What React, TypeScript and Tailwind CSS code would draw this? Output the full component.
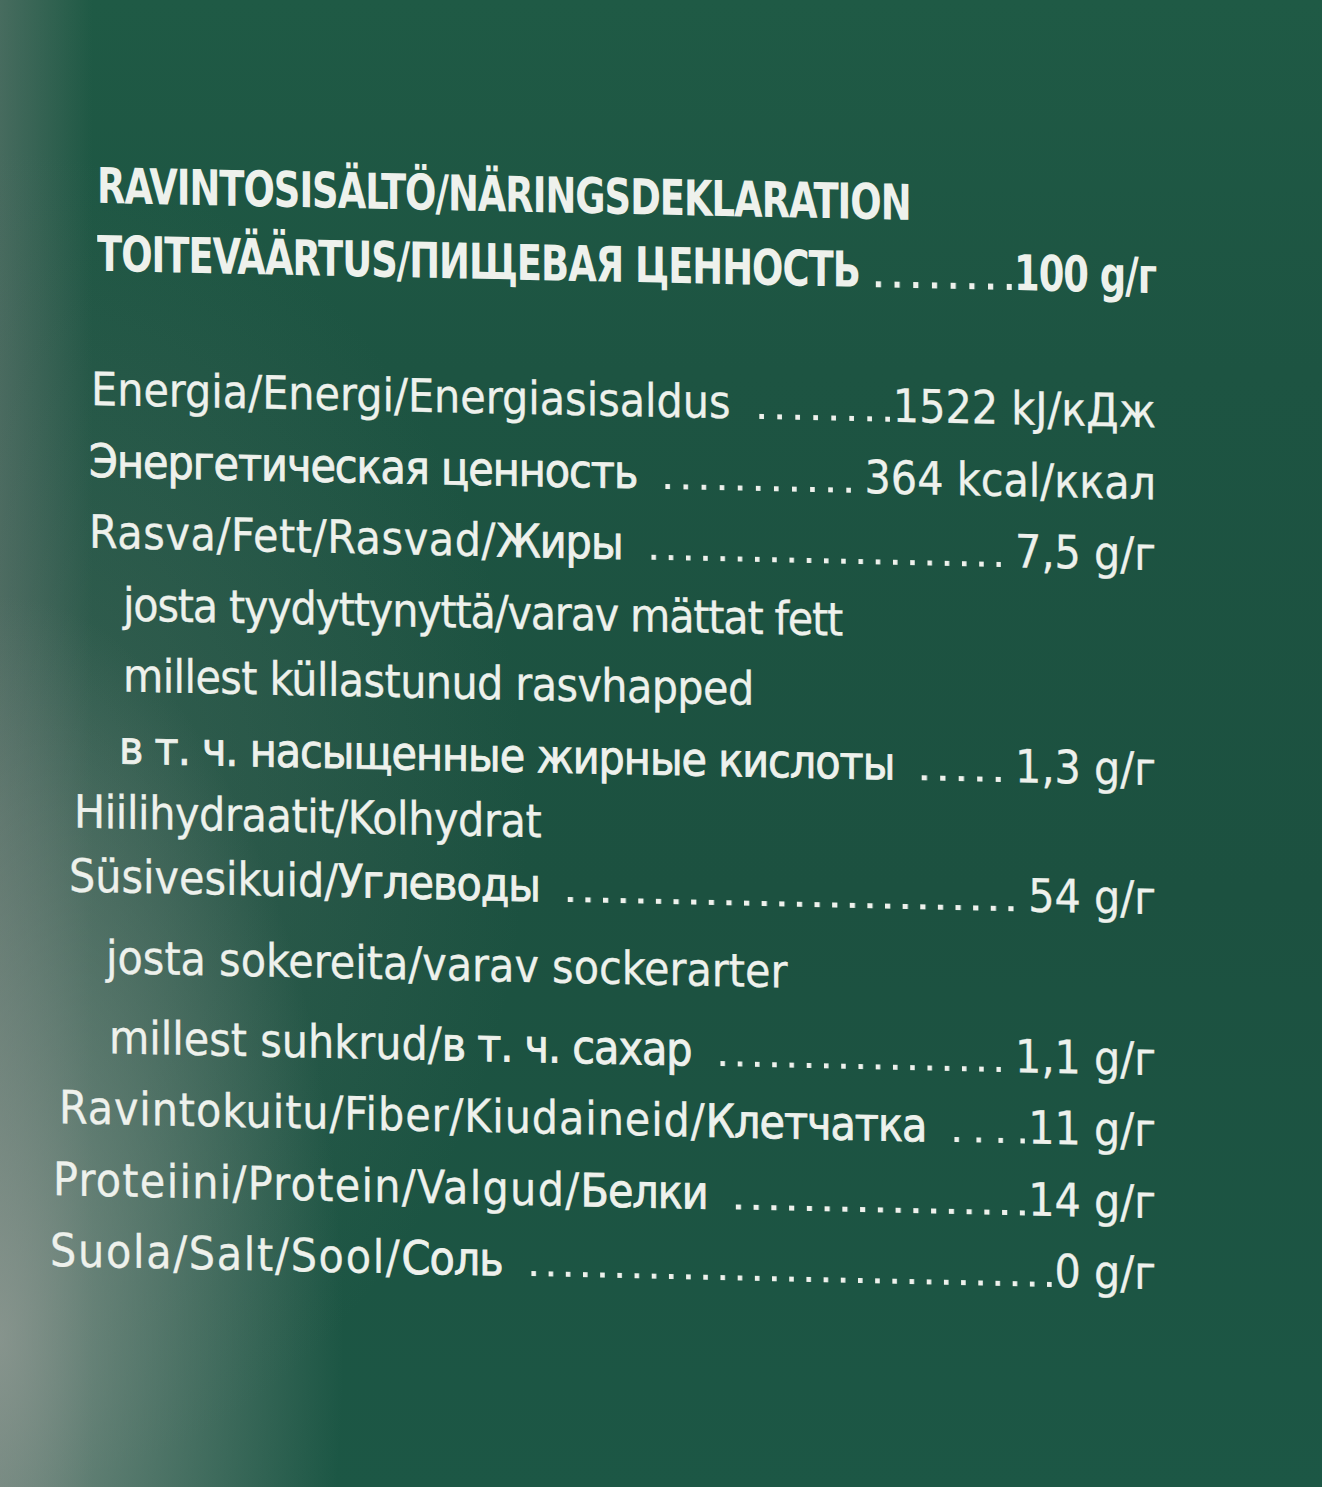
const font = "font-['DejaVu_Sans_Condensed','DejaVu_Sans',sans-serif] [font-stretch:condensed]";

type Row = {
  label: React.ReactNode;
  value?: string;
  pad: string;
  extra?: string;
  track?: string;
  space?: boolean;
};

const Ru = ({ children }: { children: React.ReactNode }) => (
  <span className="tracking-[-1px] [-webkit-text-stroke:0.8px_#eef1ec]">{children}</span>
);

// dot leader: square dots spread evenly, last one flush against the value
const Leader = ({ gap = "ml-4" }: { gap?: string }) => (
  <span
    className={`h-[5px] min-w-0 flex-1 bg-[linear-gradient(90deg,transparent_12px,#eef1ec_12px)] bg-[length:17px_5px] bg-repeat-space ${gap}`}
  />
);

const rows: Row[] = [
  { label: "Energia/Energi/Energiasisaldus", value: "1522 kJ/кДж", pad: "pl-[91px]" },
  { label: <Ru>Энергетическая ценность</Ru>, value: "364 kcal/ккал", pad: "pl-[89px]", space: true },
  {
    label: (
      <>
        Rasva/Fett/Rasvad/<Ru>Жиры</Ru>
      </>
    ),
    value: "7,5 g/г",
    pad: "pl-[89px]",
    track: "tracking-[0.6px]",
    space: true,
  },
  { label: "josta tyydyttynyttä/varav mättat fett", pad: "pl-[123px]", track: "tracking-[-1.2px]" },
  { label: "millest küllastunud rasvhapped", pad: "pl-[123px]", track: "tracking-[-0.6px]" },
  { label: <Ru>в т. ч. насыщенные жирные кислоты</Ru>, value: "1,3 g/г", pad: "pl-[119px]", space: true },
  { label: "Hiilihydraatit/Kolhydrat", pad: "pl-[74px]", extra: "-mt-[6px]", track: "tracking-[-0.4px]" },
  {
    label: (
      <>
        Süsivesikuid/<Ru>Углеводы</Ru>
      </>
    ),
    value: "54 g/г",
    pad: "pl-[69px]",
    extra: "-mt-[8px]",
    space: true,
  },
  { label: "josta sokereita/varav sockerarter", pad: "pl-[106px]", extra: "mt-[10px]" },
  {
    label: (
      <>
        millest suhkrud/<Ru>в т. ч. сахар</Ru>
      </>
    ),
    value: "1,1 g/г",
    pad: "pl-[109px]",
    extra: "mt-[8px]",
    space: true,
  },
  {
    label: (
      <>
        Ravintokuitu/Fiber/Kiudaineid/<Ru>Клетчатка</Ru>
      </>
    ),
    value: "11 g/г",
    pad: "pl-[59px]",
    track: "tracking-[0.9px]",
  },
  {
    label: (
      <>
        Proteiini/Protein/Valgud/<Ru>Белки</Ru>
      </>
    ),
    value: "14 g/г",
    pad: "pl-[53px]",
    track: "tracking-[1.3px]",
  },
  {
    label: (
      <>
        Suola/Salt/Sool/<Ru>Соль</Ru>
      </>
    ),
    value: "0 g/г",
    pad: "pl-[50px]",
    track: "tracking-[1.7px]",
  },
];

export default function App() {
  return (
    <div
      className={`relative h-[1487px] w-full overflow-hidden bg-[radial-gradient(ellipse_26%_50%_at_0%_90%,rgba(150,158,152,0.8),transparent),radial-gradient(ellipse_40%_45%_at_0%_55%,rgba(105,120,114,0.35),transparent),linear-gradient(90deg,rgba(120,130,126,0.45)_0%,transparent_7%),linear-gradient(180deg,#1f5a45_0%,#1d5442_25%,#1c5140_60%,#1c5745_100%)] text-[#eef1ec] ${font}`}
    >
      <div className="origin-top-left skew-y-[1.2deg] pt-[150px] pr-[166px]">
        {/* header */}
        <div className="pl-[97px] text-[41px] font-bold leading-[68px] tracking-[-1px]">
          <div className="scale-y-[1.2] whitespace-nowrap">RAVINTOSISÄLTÖ/NÄRINGSDEKLARATION</div>
          <div className="flex scale-y-[1.2] items-baseline">
            <span className="whitespace-nowrap">TOITEVÄÄRTUS/ПИЩЕВАЯ ЦЕННОСТЬ</span>
            <Leader gap="ml-1" />
            <span className="whitespace-nowrap pl-[2px]">100 g/г</span>
          </div>
        </div>

        {/* rows */}
        <div className="mt-[66px] text-[46px] leading-[71.5px] [-webkit-text-stroke:0.3px_#eef1ec]">
          {rows.map((r, i) => (
            <div key={i} className={`flex items-baseline ${r.pad} ${r.extra ?? ""}`}>
              <span className={`whitespace-nowrap ${r.track ?? ""}`}>{r.label}</span>
              {r.value && (
                <>
                  <Leader />
                  <span className={`whitespace-nowrap ${r.space ? "pl-[14px]" : "pl-[3px]"}`}>{r.value}</span>
                </>
              )}
            </div>
          ))}
        </div>
      </div>
    </div>
  );
}
